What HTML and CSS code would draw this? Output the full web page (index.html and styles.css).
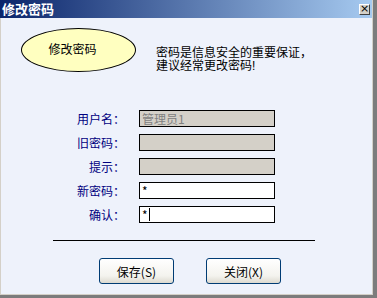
FILE: index.html
```html
<!DOCTYPE html>
<html>
<head>
<meta charset="utf-8">
<link rel="stylesheet" href="styles.css">
</head>
<body>
<div class="window">
  <div class="titlebar">
    <span class="title">修改密码</span>
    <span class="close">×</span>
  </div>
  <div class="content">
    <div class="top">
      <div class="ellipse"><span>修改密码</span></div>
      <div class="message">密码是信息安全的重要保证，<br>建议经常更改密码!</div>
    </div>
    <div class="form">
      <div class="label">用户名：</div><div class="field disabled">管理员1</div>
      <div class="label">旧密码：</div><div class="field disabled"></div>
      <div class="label">提示：</div><div class="field disabled"></div>
      <div class="label">新密码：</div><div class="field">*</div>
      <div class="label">确认：</div><div class="field">*<span class="caret"></span></div>
    </div>
    <div class="rule"></div>
    <div class="buttons">
      <button class="btn">保存(<u>S</u>)</button>
      <button class="btn">关闭(<u>X</u>)</button>
    </div>
  </div>
</div>
</body>
</html>
```
FILE: styles.css
```css
html, body {
  margin: 0;
  padding: 0;
  width: 377px;
  height: 298px;
  overflow: hidden;
  font-family: "Noto Sans CJK SC", "Liberation Sans", sans-serif;
  font-size: 12px;
}
.window {
  width: 377px;
  height: 298px;
  box-sizing: border-box;
  border-right: 4px solid #7c7c7c;
  border-bottom: 3px solid #7c7c7c;
  display: flex;
  flex-direction: column;
  background: #eef2fb;
}
.titlebar {
  height: 18px;
  flex: none;
  background: linear-gradient(to right, #0a246a, #a6caf0);
  display: flex;
  align-items: center;
  justify-content: space-between;
  padding: 0 2px 0 2px;
  border-right: 1px solid #d4d0c8;
}
.title {
  color: #fff;
  font-weight: bold;
  font-size: 13px;
  line-height: 18px;
}
.close {
  width: 11px;
  height: 11px;
  box-sizing: border-box;
  background: #d4d0c8;
  border: 1px solid;
  border-color: #fff #404040 #404040 #fff;
  font-family: "DejaVu Sans", sans-serif;
  font-size: 11px;
  line-height: 8px;
  text-align: center;
  color: #000;
  margin-top: 1px;
}
.content {
  flex: 1;
  border-left: 1px solid #d4d0c8;
  border-right: 1px solid #d4d0c8;
  border-bottom: 1px solid #d4d0c8;
  display: flex;
  flex-direction: column;
}
.top {
  display: flex;
  align-items: flex-start;
  padding-left: 20px;
  margin-top: 10px;
}
.ellipse {
  width: 115px;
  height: 44px;
  box-sizing: border-box;
  border: 1px solid #000;
  border-radius: 50%;
  background: #ffffc0;
  display: flex;
  align-items: center;
  justify-content: center;
  padding-right: 12px;
  padding-bottom: 4px;
  color: #000;
}
.message {
  margin-left: 20px;
  margin-top: 19px;
  line-height: 13px;
  font-family: "Liberation Sans", "Noto Sans CJK SC", sans-serif;
  color: #000;
}
.form {
  display: grid;
  grid-template-columns: 66px 136px;
  column-gap: 14px;
  row-gap: 7px;
  margin-left: 58px;
  margin-top: 37px;
}
.label {
  text-align: right;
  color: #000080;
  line-height: 17px;
  height: 17px;
  white-space: nowrap;
}
.field {
  height: 17px;
  box-sizing: border-box;
  border: 1px solid #000;
  background: #fff;
  line-height: 15px;
  padding-left: 2px;
  color: #000;
  display: flex;
  align-items: center;
}
.field.disabled {
  background: #d4d0c8;
  color: #808080;
}
.caret {
  display: inline-block;
  width: 1px;
  height: 13px;
  background: #000;
  margin-left: 1px;
}
.rule {
  height: 1px;
  background: #000;
  width: 262px;
  margin-left: 52px;
  margin-top: 17px;
}
.buttons {
  display: flex;
  gap: 32px;
  margin-left: 98px;
  margin-top: 17px;
}
.btn {
  width: 75px;
  height: 26px;
  box-sizing: border-box;
  border: 1px solid #003c74;
  border-radius: 3px;
  background: linear-gradient(#ffffff, #f4f3ee 70%, #dcdad0);
  font-family: "Noto Sans CJK SC", "Liberation Sans", sans-serif;
  font-size: 12px;
  color: #000;
  padding: 0;
}
.btn u {
  text-decoration: none;
}
```
